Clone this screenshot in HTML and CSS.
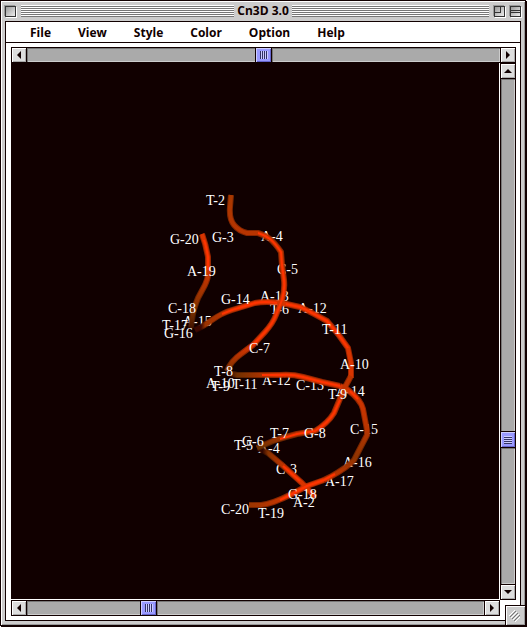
FILE: index.html
```
<!DOCTYPE html>
<html lang="en">
<head>
<meta charset="utf-8">
<title>Cn3D 3.0</title>
<link rel="stylesheet" href="styles.css">
</head>
<body>
<div class="window">
  <header class="titlebar">
    <div class="side-group">
      <button class="box" aria-label="Close"></button>
      <span class="stripes"></span>
    </div>
    <h1 class="title">Cn3D 3.0</h1>
    <div class="side-group">
      <span class="stripes"></span>
      <button class="box zoom" aria-label="Zoom"></button>
      <button class="box shade" aria-label="Collapse"></button>
    </div>
  </header>
  <main class="content">
    <nav class="menu">
      <button>File</button>
      <button>View</button>
      <button>Style</button>
      <button>Color</button>
      <button>Option</button>
      <button>Help</button>
    </nav>
    <div class="viewer">
      <div class="bar top">
        <button class="arrow" aria-label="Rotate left"><svg viewBox="0 0 14 14"><path d="M5 7 9 3V11Z"/></svg></button>
        <input type="range" aria-label="Rotate horizontally" min="0" max="1000" value="499">
        <button class="arrow" aria-label="Rotate right"><svg viewBox="0 0 14 14"><path d="M9 7 5 3V11Z"/></svg></button>
      </div>
      <svg class="scene" viewBox="11 63 488 536" role="img" aria-label="DNA backbone model">
        <defs>
          <linearGradient id="ga" gradientUnits="userSpaceOnUse" x1="0" y1="195" x2="0" y2="373">
            <stop offset="0" stop-color="#a83800"/><stop offset=".2" stop-color="#b63400"/><stop offset=".5" stop-color="#d03400"/><stop offset=".85" stop-color="#d83400"/><stop offset="1" stop-color="#713000"/>
          </linearGradient>
          <linearGradient id="gb" gradientUnits="userSpaceOnUse" x1="228" y1="0" x2="290" y2="0">
            <stop offset="0" stop-color="#300600"/><stop offset=".15" stop-color="#713000"/><stop offset=".8" stop-color="#d03400"/>
          </linearGradient>
          <linearGradient id="gb2" gradientUnits="userSpaceOnUse" x1="0" y1="385" x2="0" y2="482">
            <stop offset="0" stop-color="#d83400"/><stop offset=".45" stop-color="#b83400"/><stop offset=".75" stop-color="#8e3300"/><stop offset="1" stop-color="#d03400"/>
          </linearGradient>
          <linearGradient id="gb3" gradientUnits="userSpaceOnUse" x1="249" y1="0" x2="325" y2="0">
            <stop offset="0" stop-color="#983500"/><stop offset=".6" stop-color="#d83400"/>
          </linearGradient>
          <linearGradient id="gc" gradientUnits="userSpaceOnUse" x1="0" y1="234" x2="0" y2="330">
            <stop offset="0" stop-color="#d83400"/><stop offset=".4" stop-color="#cc3400"/><stop offset=".8" stop-color="#7c3200"/><stop offset="1" stop-color="#3c1000"/>
          </linearGradient>
          <linearGradient id="gd" gradientUnits="userSpaceOnUse" x1="194" y1="0" x2="245" y2="0">
            <stop offset="0" stop-color="#3c0800"/><stop offset=".14" stop-color="#3c0800"/><stop offset=".22" stop-color="#9a3300"/><stop offset="1" stop-color="#d83400"/>
          </linearGradient>
          <linearGradient id="ge" gradientUnits="userSpaceOnUse" x1="0" y1="378" x2="0" y2="448">
            <stop offset="0" stop-color="#bd3400"/><stop offset=".7" stop-color="#d83400"/><stop offset="1" stop-color="#693000"/>
          </linearGradient>
          <linearGradient id="gf" gradientUnits="userSpaceOnUse" x1="257" y1="0" x2="312" y2="0">
            <stop offset="0" stop-color="#300600"/><stop offset=".1" stop-color="#300600"/><stop offset=".2" stop-color="#853200"/><stop offset=".6" stop-color="#d83400"/>
          </linearGradient>
          <path id="a" d="M231 195 230 207Q229 219 234 225T247 233H258Q265 235 270 239T281 252L282 265 284 280Q285 290 282 300L276 315Q273 323 265 332L253 345 241 354Q231 361 227 371"/>
          <path id="b" d="M228 373 237 375H280Q292 374 303 377L322 382 340 386"/>
          <path id="b2" d="M340 386 348 390Q361 400 363 409L367 430V435L354 460Q348 467 330 477L324 480"/>
          <path id="b3" d="M324 480 307 486 292 494Q272 504 261 505H249"/>
          <path id="c" d="M202 234Q206 245 208 257V270Q209 277 205 285L198 298Q193 310 192 320L191 328"/>
          <path id="d" d="M195 330Q202 327 212 320T232 310L255 303Q265 301 282 303L300 307Q307 310 327 321L338 334 348 348 351 363V378"/>
          <path id="e" d="M351 376 345 387 334 413Q328 423 315 431L297 434Q285 437 273 441L257 448"/>
          <path id="f" d="M258 448 268 453 281 464 302 483 315 497"/>
        </defs>

        <g class="label">
          <text x="261" y="241">A-4</text>
          <text x="277" y="274">C-5</text>
          <text x="260" y="301">A-13</text>
          <text x="270" y="314">T-6</text>
          <text x="298" y="313">A-12</text>
          <text x="183" y="326">A-15</text>
          <text x="262" y="385">A-12</text>
          <text x="296" y="390">C-13</text>
          <text x="336" y="396">A-14</text>
          <text x="350" y="434">C-15</text>
          <text x="258" y="453">A-4</text>
          <text x="276" y="474">C-3</text>
          <text x="343" y="467">A-16</text>
          <text x="325" y="486">A-17</text>
        </g>

        <g class="tube">
          <g stroke="url(#gb)"><use href="#b"/><use href="#b" class="core"/></g>
          <g stroke="url(#gb2)"><use href="#b2"/><use href="#b2" class="core"/></g>
          <g stroke="url(#gf)"><use href="#f"/><use href="#f" class="core"/></g>
          <g stroke="url(#gb3)"><use href="#b3"/><use href="#b3" class="core"/></g>
          <g stroke="url(#gd)"><use href="#d"/><use href="#d" class="core"/></g>
          <g stroke="url(#gc)"><use href="#c"/><use href="#c" class="core"/></g>
          <g stroke="url(#ge)"><use href="#e"/><use href="#e" class="core"/></g>
          <g stroke="url(#ga)"><use href="#a"/><use href="#a" class="core"/></g>
        </g>
        <g class="shine">
          <path d="M258 233Q265 235 270 239T281 252L282 265 284 280Q285 290 282 300L276 315Q273 323 265 332L253 345"/>
          <path d="M204 240Q206 245 208 257V270"/>
          <path d="M222 314 232 310 255 303Q265 301 277 303M286 304 300 307Q307 310 327 321L338 334 348 348"/>
          <path d="M262 375H280Q292 374 303 377L322 382 340 386M350 391 358 399"/>
          <path d="M340 400 334 413Q328 423 315 431L297 434 280 439"/>
          <path d="M335 474 324 480 307 486 292 494 280 500M283 466 300 481"/>
        </g>

        <g class="label">
          <text x="206" y="205">T-2</text>
          <text x="170" y="244">G-20</text>
          <text x="212" y="242">G-3</text>
          <text x="187" y="276">A-19</text>
          <text x="221" y="304">G-14</text>
          <text x="168" y="313">C-18</text>
          <text x="162" y="330">T-17</text>
          <text x="164" y="338">G-16</text>
          <text x="322" y="334">T-11</text>
          <text x="340" y="369">A-10</text>
          <text x="249" y="353">C-7</text>
          <text x="214" y="376">T-8</text>
          <text x="206" y="388">A-10</text>
          <text x="211" y="391">T-9</text>
          <text x="232" y="389">T-11</text>
          <text x="328" y="399">T-9</text>
          <text x="304" y="438">G-8</text>
          <text x="270" y="438">T-7</text>
          <text x="242" y="446">G-6</text>
          <text x="234" y="450">T-5</text>
          <text x="288" y="499">G-18</text>
          <text x="293" y="507">A-2</text>
          <text x="221" y="514">C-20</text>
          <text x="258" y="518">T-19</text>
        </g>
      </svg>
      <div class="bar side">
        <button class="arrow" aria-label="Rotate up"><svg viewBox="0 0 14 14"><path d="M7 5 11 9H3Z"/></svg></button>
        <input type="range" aria-label="Rotate vertically" min="0" max="1000" value="721">
        <button class="arrow" aria-label="Rotate down"><svg viewBox="0 0 14 14"><path d="M7 9 3 5H11Z"/></svg></button>
      </div>
      <div class="bar bottom">
        <button class="arrow" aria-label="Spin left"><svg viewBox="0 0 14 14"><path d="M5 7 9 3V11Z"/></svg></button>
        <input type="range" aria-label="Spin" min="0" max="1000" value="257">
        <button class="arrow" aria-label="Spin right"><svg viewBox="0 0 14 14"><path d="M9 7 5 3V11Z"/></svg></button>
      </div>
    </div>
  </main>
  <svg class="grip" viewBox="0 0 19 19">
    <path class="lit" d="M3 10 9 4M5 12 11 6M7 14 13 8M9 16 14 11"/>
    <path class="dark" d="M4 11 10 5M6 13 12 7M8 15 14 9"/>
  </svg>
</div>
</body>
</html>
```
FILE: styles.css
```
* {
  box-sizing: border-box;
}

body {
  margin: 0;
  padding: 0 1px 1px 0;
  height: 100vh;
  background: #fff;
  font: bold 12px/20px "Open Sans", "Noto Sans", sans-serif;
  color: #100;
  overflow: hidden;
}

button {
  margin: 0;
  padding: 0;
  border: 0;
  background: none;
  font: inherit;
  color: inherit;
}

.window {
  position: relative;
  display: flex;
  flex-direction: column;
  height: 100%;
  padding: 0 4px 4px;
  border: 1px solid #100;
  background: #ccc;
  box-shadow: inset 1px 1px #fff, inset -1px -1px #999, 1px 1px #100;
}

/* Title bar */
.titlebar {
  display: flex;
  align-items: center;
  gap: 3px;
  height: 20px;
  flex: none;
}

.side-group {
  flex: 1;
  display: flex;
  align-items: center;
  gap: 5px;
}

.box {
  width: 11px;
  height: 11px;
  border: 1px solid #333;
  background: linear-gradient(135deg, #999, #eee);
  box-shadow: -1px -1px #999, 1px 1px #fff;
}

.zoom {
  background: linear-gradient(#333, #333) 0 5px / 6px 1px no-repeat, linear-gradient(#333, #333) 5px 0 / 1px 6px no-repeat, linear-gradient(135deg, #999, #eee);
}

.shade {
  background: linear-gradient(#333, #333) 0 3px / 9px 1px no-repeat, linear-gradient(#333, #333) 0 5px / 9px 1px no-repeat, linear-gradient(135deg, #999, #eee);
}

.stripes {
  flex: 1;
  height: 12px;
  background: repeating-linear-gradient(#fff 0 1px, #777 1px 2px);
}

.title {
  margin: 0;
  font-size: 12px;
  line-height: 18px;
}

/* Content */
.content {
  flex: 1;
  min-height: 0;
  display: flex;
  flex-direction: column;
  border: 1px solid #100;
  background: #fff;
}

.menu {
  display: flex;
  gap: 27px;
  flex: none;
  padding-left: 24px;
  border-bottom: 1px solid #100;
}

.menu button {
  height: 20px;
  line-height: 22px;
}

.viewer {
  flex: 1;
  min-height: 0;
  display: grid;
  grid-template-columns: 1fr 16px;
  grid-template-rows: 16px 1fr 16px;
  margin: 4px 4px 4px 5px;
}

.scene {
  width: calc(100% - 1px);
  height: calc(100% - 1px);
  min-height: 0;
  background: #100;
}

/* Scroll bars */
.bar {
  display: flex;
  min-width: 0;
  min-height: 0;
  border: 1px solid #100;
}

.top {
  grid-column: 1 / 3;
}

.side {
  flex-direction: column;
}

.arrow {
  flex: none;
  width: 14px;
  height: 14px;
  background: #ddd;
  box-shadow: inset 1px 1px #fff, inset -1px -1px #aaa;
}

.arrow svg {
  display: block;
  fill: #100;
}

.bar input {
  appearance: none;
  flex: 1;
  min-width: 0;
  min-height: 0;
  width: 100%;
  height: 14px;
  margin: 0;
  border: solid #100;
  border-width: 0 1px;
  background: #aaa;
  box-shadow: inset 1px 1px #777, inset -1px -1px #ccc;
}

.side input {
  writing-mode: vertical-lr;
  width: 14px;
  border-width: 1px 0;
}

.bar input::-webkit-slider-thumb {
  appearance: none;
  width: 17px;
  height: 14px;
  border: solid #100;
  border-width: 0 1px;
  background: repeating-linear-gradient(90deg, #336 0 1px, #ccf 1px 2px) 4px 3px / 8px 8px no-repeat, #99f;
  box-shadow: inset 1px 1px #ccf, inset -1px -1px #66c, 1px 0 #777;
}

.side input::-webkit-slider-thumb {
  width: 14px;
  height: 17px;
  border-width: 1px 0;
  background: repeating-linear-gradient(#ccf 0 1px, #336 1px 2px) 3px 4px / 8px 8px no-repeat, #99f;
  box-shadow: inset 1px 1px #ccf, inset -1px -1px #66c, 0 1px #777;
}

/* Molecule */
.label {
  font: 14px "Liberation Serif", serif;
  fill: #fff;
}

.tube {
  fill: none;
  stroke-width: 6px;
  stroke-linejoin: round;
}

.tube use {
  opacity: 0.7;
}

.tube .core {
  stroke-width: 4px;
  opacity: 1;
}

.shine {
  fill: none;
  stroke: #f30;
  stroke-width: 2px;
  stroke-linejoin: round;
}

.grip {
  position: absolute;
  right: 0;
  bottom: 0;
  width: 20px;
  height: 20px;
  border: solid #100;
  border-width: 1px 0 0 1px;
  background: #ccc;
  box-shadow: inset 1px 1px #fff, inset -1px -1px #999;
}

.grip path {
  fill: none;
}

.lit {
  stroke: #fff;
}

.dark {
  stroke: #777;
}
```
